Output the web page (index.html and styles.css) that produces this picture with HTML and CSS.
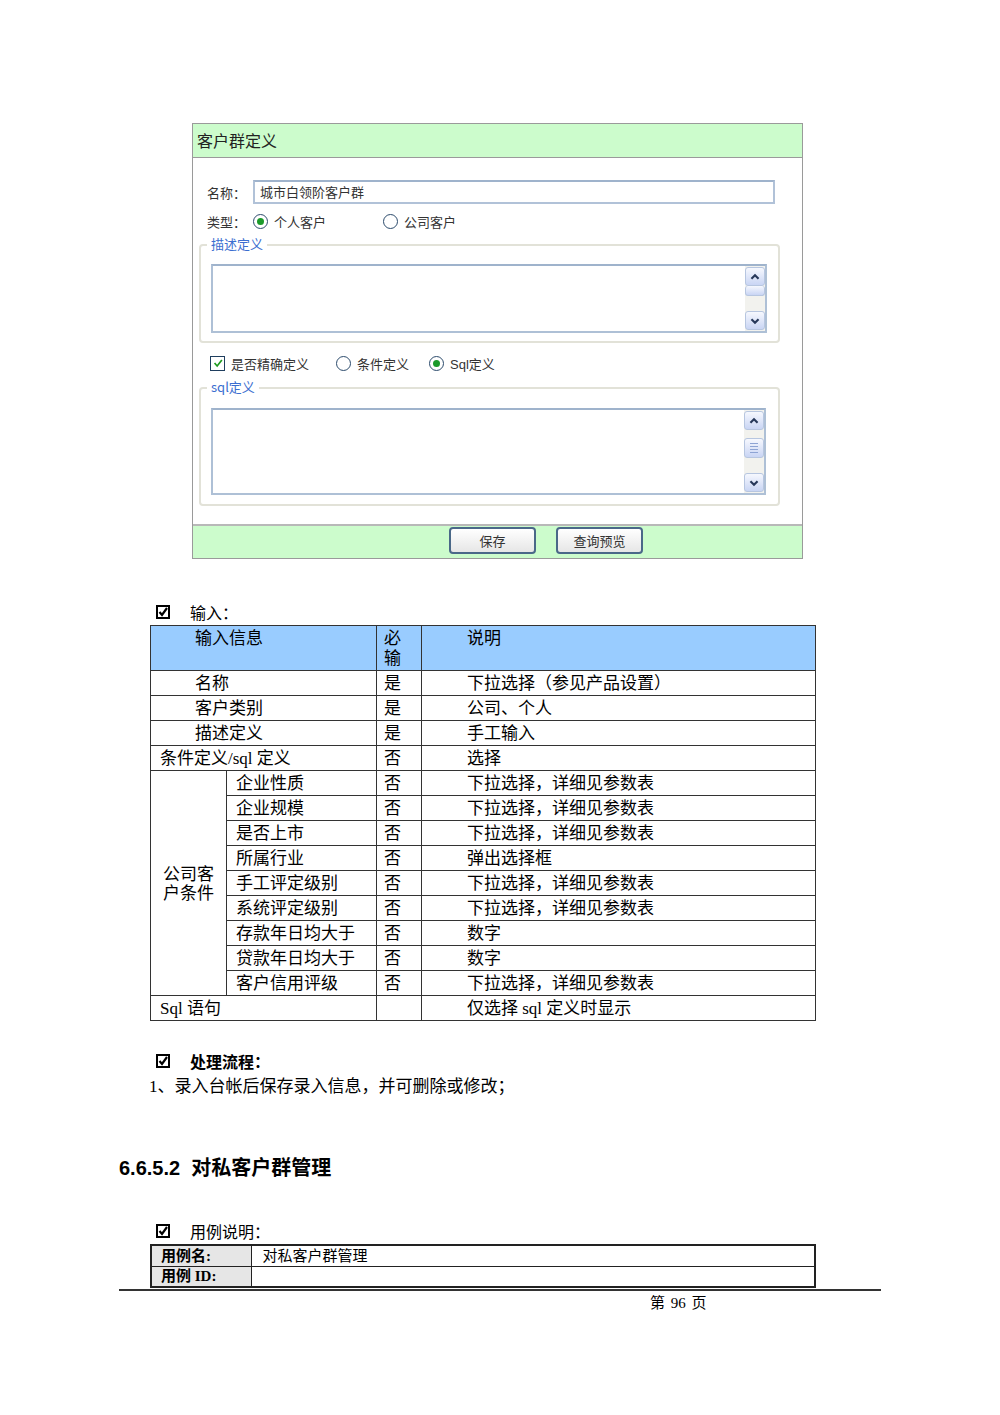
FILE: index.html
```html
<!DOCTYPE html>
<html lang="zh">
<head>
<meta charset="utf-8">
<title>客户群定义</title>
<link rel="stylesheet" href="styles.css">
</head>
<body>
<div class="page">
  <div class="panel">
    <div class="panel-head">客户群定义</div>
    <div class="panel-body">
      <div class="row name-row">
        <span class="lbl">名称：</span>
        <div class="input">城市白领阶客户群</div>
      </div>
      <div class="row type-row">
        <span class="lbl">类型：</span>
        <span class="radio on"></span><span class="opt">个人客户</span>
        <span class="radio gap2"></span><span class="opt">公司客户</span>
      </div>
      <div class="fs fs1">
        <span class="legend">描述定义</span>
        <div class="ta ta1">
          <div class="sb">
            <div class="sb-btn up"><svg viewBox="0 0 18 18" width="18" height="18"><path d="M5 11 L9 7 L13 11" fill="none" stroke="#27385a" stroke-width="2.4"/></svg></div>
            <div class="sb-thumb small"></div>
            <div class="sb-track"></div>
            <div class="sb-btn down"><svg viewBox="0 0 18 18" width="18" height="18"><path d="M5 7 L9 11 L13 7" fill="none" stroke="#27385a" stroke-width="2.4"/></svg></div>
          </div>
        </div>
      </div>
      <div class="row check-row">
        <span class="check"><svg viewBox="0 0 14 14" width="14" height="14"><path d="M3 7 L6 10.5 L11.5 3.5" fill="none" stroke="#1f9a1f" stroke-width="2"/></svg></span>
        <span class="opt">是否精确定义</span>
        <span class="radio g3"></span><span class="opt">条件定义</span>
        <span class="radio on g4"></span><span class="opt sans">Sql定义</span>
      </div>
      <div class="fs fs2">
        <span class="legend">sql定义</span>
        <div class="ta ta2">
          <div class="sb">
            <div class="sb-btn up"><svg viewBox="0 0 18 18" width="18" height="18"><path d="M5 11 L9 7 L13 11" fill="none" stroke="#27385a" stroke-width="2.4"/></svg></div>
            <div class="sb-track t1"></div>
            <div class="sb-thumb big"><i></i><i></i><i></i><i></i></div>
            <div class="sb-track t2"></div>
            <div class="sb-btn down"><svg viewBox="0 0 18 18" width="18" height="18"><path d="M5 7 L9 11 L13 7" fill="none" stroke="#27385a" stroke-width="2.4"/></svg></div>
          </div>
        </div>
      </div>
    </div>
    <div class="panel-foot">
      <span class="btn">保存</span>
      <span class="btn">查询预览</span>
    </div>
  </div>

  <div class="sect s-input"><span class="box"><svg viewBox="0 0 14 14" width="14" height="14"><rect x="1" y="1" width="12" height="12" fill="none" stroke="#000" stroke-width="2"/><path d="M3.5 7 L6 10 L11 3" fill="none" stroke="#000" stroke-width="2.2"/></svg></span><span>输入：</span></div>

  <table class="grid">
    <colgroup><col class="c1"><col class="c2"><col class="c3"><col class="c4"></colgroup>
    <tr class="head">
      <td colspan="2" class="ind">输入信息</td>
      <td class="req">必<br>输</td>
      <td class="desc">说明</td>
    </tr>
    <tr><td colspan="2" class="ind">名称</td><td class="req">是</td><td class="desc">下拉选择（参见产品设置）</td></tr>
    <tr><td colspan="2" class="ind">客户类别</td><td class="req">是</td><td class="desc">公司、个人</td></tr>
    <tr><td colspan="2" class="ind">描述定义</td><td class="req">是</td><td class="desc">手工输入</td></tr>
    <tr><td colspan="2" class="ind2">条件定义/sql 定义</td><td class="req">否</td><td class="desc">选择</td></tr>
    <tr><td rowspan="9" class="grp">公司客<br>户条件</td><td class="sub">企业性质</td><td class="req">否</td><td class="desc">下拉选择，详细见参数表</td></tr>
    <tr><td class="sub">企业规模</td><td class="req">否</td><td class="desc">下拉选择，详细见参数表</td></tr>
    <tr><td class="sub">是否上市</td><td class="req">否</td><td class="desc">下拉选择，详细见参数表</td></tr>
    <tr><td class="sub">所属行业</td><td class="req">否</td><td class="desc">弹出选择框</td></tr>
    <tr><td class="sub">手工评定级别</td><td class="req">否</td><td class="desc">下拉选择，详细见参数表</td></tr>
    <tr><td class="sub">系统评定级别</td><td class="req">否</td><td class="desc">下拉选择，详细见参数表</td></tr>
    <tr><td class="sub">存款年日均大于</td><td class="req">否</td><td class="desc">数字</td></tr>
    <tr><td class="sub">贷款年日均大于</td><td class="req">否</td><td class="desc">数字</td></tr>
    <tr><td class="sub">客户信用评级</td><td class="req">否</td><td class="desc">下拉选择，详细见参数表</td></tr>
    <tr><td colspan="2" class="ind2">Sql 语句</td><td class="req"></td><td class="desc">仅选择 sql 定义时显示</td></tr>
  </table>

  <div class="sect s-proc bold"><span class="box"><svg viewBox="0 0 14 14" width="14" height="14"><rect x="1" y="1" width="12" height="12" fill="none" stroke="#000" stroke-width="2"/><path d="M3.5 7 L6 10 L11 3" fill="none" stroke="#000" stroke-width="2.2"/></svg></span><span>处理流程：</span></div>
  <p class="para">1、录入台帐后保存录入信息，并可删除或修改；</p>

  <h3 class="h">6.6.5.2&nbsp; 对私客户群管理</h3>

  <div class="sect s-use"><span class="box"><svg viewBox="0 0 14 14" width="14" height="14"><rect x="1" y="1" width="12" height="12" fill="none" stroke="#000" stroke-width="2"/><path d="M3.5 7 L6 10 L11 3" fill="none" stroke="#000" stroke-width="2.2"/></svg></span><span>用例说明：</span></div>
  <table class="usecase">
    <tr><td class="k">用例名:</td><td class="v">对私客户群管理</td></tr>
    <tr><td class="k">用例 ID:</td><td class="v"></td></tr>
  </table>

  <div class="rule"></div>
  <div class="pagenum">第 96 页</div>
</div>
</body>
</html>
```
FILE: styles.css
```css
* { box-sizing: border-box; }
body { margin: 0; background: #fff; color: #000; font-family: "Liberation Serif", "Noto Sans CJK SC", serif; }
.page { width: 1000px; height: 1415px; padding-top: 123px; }

/* panel */
.panel { margin-left: 192px; width: 611px; border: 1px solid #9a9a9a; font-family: "Noto Sans CJK SC", sans-serif; font-size: 13px; color: #333; }
.panel-head { height: 34px; background: #ccfccc; border-bottom: 1px solid #9a9a9a; font-size: 16px; line-height: 32px; padding-left: 4px; color: #222; }
.panel-body { height: 366px; padding-top: 22px; background: #fff; }
.panel-foot { height: 34px; background: #ccfccc; border-top: 2px solid #b8b8b8; display: flex; padding-left: 256px; gap: 20px; padding-top: 0; }

.row { display: flex; align-items: center; padding-left: 14px; }
.lbl { width: 46px; color: #333; }
.input { width: 522px; height: 24px; border: 2px solid #b1c2d8; border-top-color: #9fb3cc; padding-left: 5px; line-height: 20px; color: #333; }
.type-row { margin-top: 7px; height: 20px; }
.radio { width: 15px; height: 15px; border: 1.6px solid #2c4b6c; border-radius: 50%; background: #fff; display: inline-flex; align-items: center; justify-content: center; margin-right: 6px; flex: none; }
.radio.on::after { content: ""; width: 7px; height: 7px; border-radius: 50%; background: #1b9a2a; }
.opt { color: #333; }
.sans { font-family: "Liberation Sans", "Noto Sans CJK SC", sans-serif; }
.gap2 { margin-left: 57px; }
.g3 { margin-left: 27px; }
.g4 { margin-left: 20px; }

.fs { position: relative; margin-left: 6px; width: 581px; border: 2px solid #e2e2d8; border-radius: 4px; }
.legend { position: absolute; left: 6px; top: -10px; background: #fff; padding: 0 4px; color: #3b6ed0; font-size: 13px; line-height: 16px; }
.fs1 { margin-top: 13px; height: 99px; padding: 18px 0 0 10px; }
.fs2 { margin-top: 14px; height: 119px; padding: 19px 0 0 10px; }
.ta { border: 2px solid #aec0d6; border-top-color: #9fb3cc; display: flex; justify-content: flex-end; background: #fff; }
.ta1 { width: 556px; height: 69px; }
.ta2 { width: 555px; height: 87px; }

.check-row { margin-top: 10px; height: 20px; padding-left: 17px; }
.check { width: 15px; height: 15px; border: 1.6px solid #1f3e5e; display: inline-flex; align-items: center; justify-content: center; margin-right: 6px; background: #fff; flex: none; }
.check svg { width: 12px; height: 12px; }

.sb { width: 20px; display: flex; flex-direction: column; background: #f2f2ee; padding: 1px 0; }
.sb-btn, .sb-thumb { border: 1px solid #b7c6e0; border-radius: 3px; background: linear-gradient(#f6f8fe, #c9d5f4); display: flex; align-items: center; justify-content: center; }
.sb-btn { height: 19px; }
.sb-btn svg { width: 16px; height: 16px; }
.sb-thumb.small { height: 10px; border-top: none; }
.sb-track { flex: 1; }
.sb-track.t1 { flex: 0 0 8px; }
.sb-thumb.big { height: 20px; flex-direction: column; gap: 2px; }
.sb-thumb.big i { display: block; width: 8px; height: 1px; background: #8ea4d4; }

.btn { width: 87px; height: 27px; margin-top: 1px; border: 2px solid #4a6888; border-radius: 4px; background: linear-gradient(#ffffff, #e6e6e6); display: flex; align-items: center; justify-content: center; font-family: "Liberation Serif", "Noto Sans CJK SC", serif; font-size: 13px; color: #333; }

/* document */
.sect { display: flex; align-items: center; height: 24px; font-size: 16px; padding-left: 156px; }
.sect .box { width: 34px; display: flex; align-items: center; }
.s-input { margin-top: 41px; }
.bold { font-weight: bold; }
.s-proc { margin-top: 28px; }
.s-use { margin-top: 38px; }

.grid { margin-left: 150px; margin-top: 1px; border-collapse: collapse; width: 665px; font-size: 17px; table-layout: fixed; }
.grid col.c1 { width: 76px; }
.grid col.c2 { width: 150px; }
.grid col.c3 { width: 45px; }
.grid col.c4 { width: 394px; }
.grid td { border: 1px solid #333; height: 25px; padding: 2px 0 0 0; line-height: 22px; vertical-align: middle; white-space: nowrap; }
.grid tr.head td { background: #99ccff; height: 45px; vertical-align: top; line-height: 20px; padding-top: 3px; }
.grid .ind { padding-left: 44px; }
.grid .ind2 { padding-left: 9px; }
.grid .sub { padding-left: 9px; }
.grid .req { padding-left: 7px; }
.grid .desc { padding-left: 45px; }
.grid .grp { text-align: center; line-height: 19px; }

.para { margin: 2px 0 0 0; padding-left: 149px; font-size: 17px; height: 24px; line-height: 24px; }
.h { margin: 56px 0 0 0; padding-left: 119px; height: 26px; line-height: 26px; font-family: "Liberation Sans", "Noto Sans CJK SC", sans-serif; font-size: 20px; font-weight: bold; }

.usecase { margin-left: 150px; margin-top: 1px; width: 666px; border-collapse: collapse; border: 2px solid #222; font-size: 15px; }
.usecase td { border: 1px solid #222; height: 21px; padding: 0; line-height: 18px; }
.usecase .k { width: 100px; background: #e6e6e6; font-weight: bold; padding-left: 9px; }
.usecase .v { padding-left: 11px; }

.rule { margin: 1px 0 0 119px; width: 762px; height: 2px; background: #333; }
.pagenum { margin-top: 3px; height: 18px; line-height: 18px; font-size: 15px; padding-left: 650px; word-spacing: 2px; }
```
